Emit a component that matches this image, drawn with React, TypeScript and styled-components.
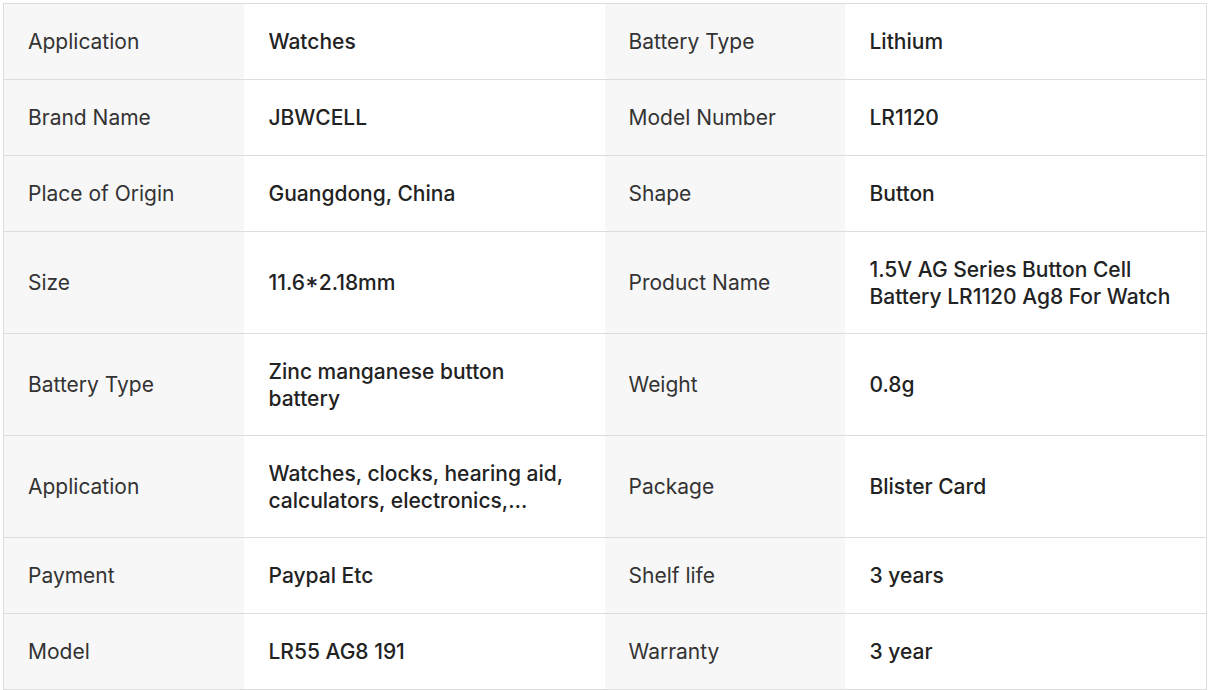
import * as React from 'react'
import styled, { createGlobalStyle } from 'styled-components'

const GlobalStyle = createGlobalStyle`
  body {
    margin: 0;
    background: #ffffff;
    font-family: Inter, "Noto Sans", sans-serif;
  }
`

const Wrapper = styled.div`
  padding: 3px;
`

const Table = styled.table`
  width: 1203px;
  border-collapse: collapse;
  table-layout: fixed;
  border: 1px solid #dddddd;
`

const Col = styled.col<{ $width: number }>`
  width: ${p => p.$width}px;
`

const Row = styled.tr`
  border-bottom: 1px solid #dddddd;
`

const Cell = styled.td`
  height: 28px;
  padding: 23.5px 25px;
  font-size: 21px;
  line-height: 27px;
  vertical-align: middle;
`

const LabelCell = styled(Cell)`
  padding-left: 24px;
  background: #f7f7f7;
  color: #333333;
  font-weight: 400;
`

const ValueCell = styled(Cell)`
  background: #ffffff;
  color: #222222;
  font-weight: 500;
`

const Clamp = styled.div`
  display: -webkit-box;
  -webkit-box-orient: vertical;
  -webkit-line-clamp: 2;
  overflow: hidden;
`

interface Spec {
  label: string
  value: string
}

const rows: [Spec, Spec][] = [
  [
    { label: 'Application', value: 'Watches' },
    { label: 'Battery Type', value: 'Lithium' }
  ],
  [
    { label: 'Brand Name', value: 'JBWCELL' },
    { label: 'Model Number', value: 'LR1120' }
  ],
  [
    { label: 'Place of Origin', value: 'Guangdong, China' },
    { label: 'Shape', value: 'Button' }
  ],
  [
    { label: 'Size', value: '11.6*2.18mm' },
    { label: 'Product Name', value: '1.5V AG Series Button Cell Battery LR1120 Ag8 For Watch' }
  ],
  [
    { label: 'Battery Type', value: 'Zinc manganese button battery' },
    { label: 'Weight', value: '0.8g' }
  ],
  [
    {
      label: 'Application',
      value: 'Watches, clocks, hearing aid, calculators, electronics,…'
    },
    { label: 'Package', value: 'Blister Card' }
  ],
  [
    { label: 'Payment', value: 'Paypal Etc' },
    { label: 'Shelf life', value: '3 years' }
  ],
  [
    { label: 'Model', value: 'LR55 AG8 191' },
    { label: 'Warranty', value: '3 year' }
  ]
]

const App: React.FC = () => (
  <Wrapper>
    <GlobalStyle />
    <Table>
      <colgroup>
        <Col $width={240} />
        <Col $width={361} />
        <Col $width={240} />
        <Col $width={362} />
      </colgroup>
      <tbody>
        {rows.map((pair, i) => (
          <Row key={i}>
            {pair.map(spec => (
              <React.Fragment key={spec.label}>
                <LabelCell>{spec.label}</LabelCell>
                <ValueCell>
                  <Clamp>{spec.value}</Clamp>
                </ValueCell>
              </React.Fragment>
            ))}
          </Row>
        ))}
      </tbody>
    </Table>
  </Wrapper>
)

export default App
